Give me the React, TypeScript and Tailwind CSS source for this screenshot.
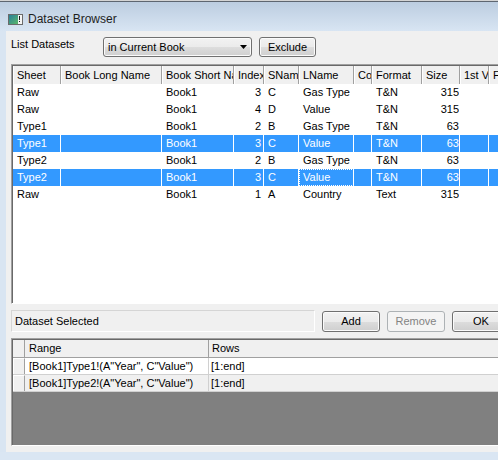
import React from 'react';

const cols = [
  { name: 'Sheet', w: 'w-[48px]', right: false },
  { name: 'Book Long Name', w: 'w-[101px]', right: false },
  { name: 'Book Short Name', w: 'w-[72px]', right: false },
  { name: 'Index', w: 'w-[30px]', right: true },
  { name: 'SName', w: 'w-[35px]', right: false },
  { name: 'LName', w: 'w-[55px]', right: false },
  { name: 'Comments', w: 'w-[18px]', right: false },
  { name: 'Format', w: 'w-[50px]', right: false },
  { name: 'Size', w: 'w-[38px]', right: true },
  { name: '1st Value', w: 'w-[29px]', right: false },
  { name: 'Full Name', w: 'w-[60px]', right: false },
];

const rows = [
  { cells: ['Raw', '', 'Book1', '3', 'C', 'Gas Type', '', 'T&N', '315', '', ''], sel: false },
  { cells: ['Raw', '', 'Book1', '4', 'D', 'Value', '', 'T&N', '315', '', ''], sel: false },
  { cells: ['Type1', '', 'Book1', '2', 'B', 'Gas Type', '', 'T&N', '63', '', ''], sel: false },
  { cells: ['Type1', '', 'Book1', '3', 'C', 'Value', '', 'T&N', '63', '', ''], sel: true },
  { cells: ['Type2', '', 'Book1', '2', 'B', 'Gas Type', '', 'T&N', '63', '', ''], sel: false },
  { cells: ['Type2', '', 'Book1', '3', 'C', 'Value', '', 'T&N', '63', '', ''], sel: true, focus: 5 },
  { cells: ['Raw', '', 'Book1', '1', 'A', 'Country', '', 'Text', '315', '', ''], sel: false },
];

const picked = [
  { range: '[Book1]Type1!(A"Year", C"Value")', rows: '[1:end]' },
  { range: '[Book1]Type2!(A"Year", C"Value")', rows: '[1:end]' },
];

const btn =
  'h-[21px] w-[58px] rounded-[3px] border border-[#707070] bg-[linear-gradient(#f2f2f2,#ebebeb_50%,#dddddd_51%,#cfcfcf)] shadow-[inset_0_0_0_1px_#fbfbfb] text-[11px] text-black flex items-center justify-center shrink-0';

function AppIcon() {
  return (
    <svg width="15" height="11" viewBox="0 0 15 11">
      <defs>
        <linearGradient id="ic" x1="0" y1="0" x2="1" y2="1">
          <stop offset="0" stopColor="#2a7f9a" />
          <stop offset="1" stopColor="#5bb86a" />
        </linearGradient>
      </defs>
      <rect x="0.5" y="0.5" width="14" height="10" fill="#f4f4f4" stroke="#6b6b6b" />
      <rect x="1" y="1" width="9" height="9" fill="url(#ic)" />
      <rect x="11" y="2" width="1" height="4" fill="#1a1a1a" />
      <rect x="11" y="7" width="1" height="1" fill="#1a1a1a" />
    </svg>
  );
}

export default function App() {
  return (
    <div className="w-[498px] h-[460px] overflow-hidden bg-[#dae6f3] font-['Liberation_Sans',Arial,sans-serif] text-[11px] text-black">
      <div className="h-[1px] bg-[#d4d4d4]" />
      <div className="h-[1px] bg-[#5e6670]" />
      <div className="h-[29px] bg-[linear-gradient(#bccde0,#d8e5f3)] flex items-center pl-[8px] pt-[5px]">
        <AppIcon />
        <span className="ml-[5px] text-[12px] text-[#1e1e1e]">Dataset Browser</span>
      </div>

      <div className="flex h-[421px]">
        <div className="w-[6px] shrink-0 bg-[#d9e5f2]" />
        <div className="flex-1 min-w-0 overflow-hidden bg-[#f0f0f0] pl-[5px] pt-[6px] flex flex-col">
          {/* top controls */}
          <div className="flex items-start h-[20px]">
            <div className="w-[92px] pt-[1px] leading-[13px]">List Datasets</div>
            <div className="relative w-[149px] h-[20px] rounded-[3px] border border-[#707070] bg-[linear-gradient(#f2f2f2,#ebebeb_50%,#dddddd_51%,#cfcfcf)] shadow-[inset_0_0_0_1px_#fbfbfb] flex items-center pl-[4px]">
              in Current Book
              <svg className="absolute right-[4px] top-[7px]" width="7" height="4" viewBox="0 0 7 4">
                <path d="M0 0H7L3.5 4Z" fill="#000" />
              </svg>
            </div>
            <div className={btn + ' ml-[7px] !w-[57px] !h-[20px]'}>Exclude</div>
          </div>

          {/* dataset table */}
          <div className="mt-[7px] w-[540px] h-[240px] shrink-0 border-t border-l border-b border-[#a0a0a0] border-b-white">
            <div className="h-full border-t border-l border-[#696969] bg-white flex flex-col">
              <div className="flex h-[18px] bg-[#f0f0f0] shrink-0">
                {cols.map((c) => (
                  <div
                    key={c.name}
                    className={c.w + ' shrink-0 h-full border-l border-white border-r border-r-[#a0a0a0] pl-[3px] leading-[18px] whitespace-nowrap overflow-hidden'}
                  >
                    {c.name}
                  </div>
                ))}
              </div>
              {rows.map((r, i) => (
                <div key={i} className={'flex h-[17px] shrink-0 ' + (r.sel ? 'bg-[#3399ff] text-white' : '')}>
                  {r.cells.map((v, j) => (
                    <div
                      key={j}
                      className={
                        cols[j].w +
                        ' shrink-0 h-full border-r border-white leading-[17px] whitespace-nowrap overflow-hidden ' +
                        (cols[j].right ? (j === 3 ? 'text-right pr-[2px]' : 'text-right pr-[0px]') : 'pl-[4px]') +
                        (r.focus === j ? ' outline-1 outline-dotted outline-white -outline-offset-1' : '')
                      }
                    >
                      {v}
                    </div>
                  ))}
                </div>
              ))}
            </div>
          </div>

          {/* selection line */}
          <div className="mt-[6px] flex items-start h-[22px] shrink-0">
            <div className="w-[304px] h-[22px] shrink-0 border-t border-l border-[#d5d5d5] border-b border-r border-b-white border-r-white pl-[3px] leading-[20px]">
              Dataset Selected
            </div>
            <div className={btn + ' ml-[7px] mt-[1px]'}>Add</div>
            <div className="ml-[7px] mt-[1px] h-[21px] w-[58px] shrink-0 rounded-[3px] border border-[#adb2b5] bg-[#f4f4f4] text-[#838383] flex items-center justify-center">
              Remove
            </div>
            <div className={btn + ' ml-[7px] mt-[1px]'}>OK</div>
          </div>

          {/* picked datasets grid */}
          <div className="mt-[6px] w-[540px] h-[108px] shrink-0 border-t border-l border-[#a0a0a0] border-b border-b-white">
            <div className="h-full border-t border-l border-[#696969] bg-[#808080] flex flex-col">
              <div className="flex h-[18px] shrink-0 bg-[#f0f0f0] border-b border-[#a0a0a0]">
                <div className="w-[12px] shrink-0 border-r border-[#a0a0a0]" />
                <div className="w-[184px] shrink-0 border-r border-[#a0a0a0] pl-[4px] leading-[17px]">Range</div>
                <div className="flex-1 pl-[3px] leading-[17px]">Rows</div>
              </div>
              {picked.map((p, i) => (
                <div key={i} className={'flex h-[17px] shrink-0 border-b border-[#d0d0d0] ' + (i === 0 ? 'bg-white' : 'bg-[#f0f0f0]')}>
                  <div className="w-[12px] shrink-0 bg-[#f0f0f0] border-t border-l border-white border-r border-r-[#a0a0a0]" />
                  <div className="w-[184px] shrink-0 border-r border-[#d0d0d0] pl-[4px] leading-[16px] whitespace-nowrap">{p.range}</div>
                  <div className="flex-1 pl-[2px] leading-[16px]">{p.rows}</div>
                </div>
              ))}
            </div>
          </div>
        </div>
      </div>
    </div>
  );
}
